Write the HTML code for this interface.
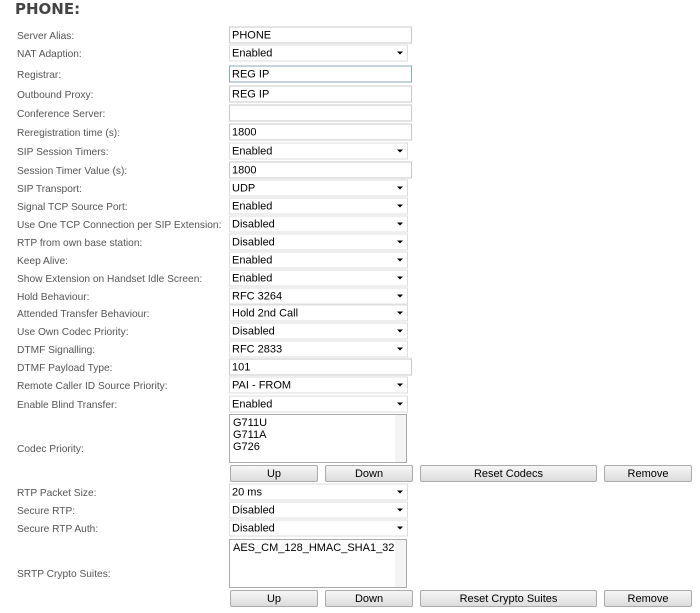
<!DOCTYPE html>
<html><head><style>
body{margin:0;width:700px;height:613px;background:#fff;position:relative;overflow:hidden;font-family:"Liberation Sans",Arial,sans-serif}
h1{position:absolute;left:15px;top:0;margin:0;font-size:15px;font-weight:bold;color:#444;font-family:"DejaVu Sans",sans-serif}
.l{position:absolute;left:17px;font-size:10.2px;color:#555;white-space:nowrap;transform:translateY(-45%);margin-top:1px}
.i,.s{position:absolute;left:229px;height:15px;border:1px solid #c8c8c8;background:#fff;font-size:11px;color:#000;line-height:16px;padding-left:2px;box-sizing:content-box;transform:translateY(-50%)}
.i{width:179px}
.s{width:175px;border-color:#ddd}
.s:after{content:"";position:absolute;right:4px;top:6px;border-left:3px solid transparent;border-right:3px solid transparent;border-top:3px solid #000}
.r{border-color:#8ab}
.lb{position:absolute;left:229px;border:1px solid #aaa;font-size:11px;line-height:12px;padding:2px 0 0 3px;box-sizing:border-box;width:178px;height:49px}
.lb:after{content:"";position:absolute;right:0;top:0;width:11px;height:100%;background:#f4f4f4}
.b{position:absolute;height:15px;border:1px solid #aaa;border-radius:2px;background:linear-gradient(#f6f6f6,#dcdcdc);font-size:11px;text-align:center;line-height:16px;color:#000}
</style></head><body>
<h1>PHONE:</h1>
<div class="l" style="top:35px">Server Alias:</div><div class="i" style="top:35px">PHONE</div>
<div class="l" style="top:53px">NAT Adaption:</div><div class="s" style="top:53px">Enabled</div>
<div class="l" style="top:74px">Registrar:</div><div class="i r" style="top:74px">REG IP</div>
<div class="l" style="top:94px">Outbound Proxy:</div><div class="i" style="top:94px">REG IP</div>
<div class="l" style="top:113px">Conference Server:</div><div class="i" style="top:113px"></div>
<div class="l" style="top:132px">Reregistration time (s):</div><div class="i" style="top:132px">1800</div>
<div class="l" style="top:151px">SIP Session Timers:</div><div class="s" style="top:151px">Enabled</div>
<div class="l" style="top:170px">Session Timer Value (s):</div><div class="i" style="top:170px">1800</div>
<div class="l" style="top:188px">SIP Transport:</div><div class="s" style="top:188px">UDP</div>
<div class="l" style="top:206px">Signal TCP Source Port:</div><div class="s" style="top:206px">Enabled</div>
<div class="l" style="top:224px">Use One TCP Connection per SIP Extension:</div><div class="s" style="top:224px">Disabled</div>
<div class="l" style="top:242px">RTP from own base station:</div><div class="s" style="top:242px">Disabled</div>
<div class="l" style="top:260px">Keep Alive:</div><div class="s" style="top:260px">Enabled</div>
<div class="l" style="top:278px">Show Extension on Handset Idle Screen:</div><div class="s" style="top:278px">Enabled</div>
<div class="l" style="top:296px">Hold Behaviour:</div><div class="s" style="top:296px">RFC 3264</div>
<div class="l" style="top:313px">Attended Transfer Behaviour:</div><div class="s" style="top:313px">Hold 2nd Call</div>
<div class="l" style="top:331px">Use Own Codec Priority:</div><div class="s" style="top:331px">Disabled</div>
<div class="l" style="top:349px">DTMF Signalling:</div><div class="s" style="top:349px">RFC 2833</div>
<div class="l" style="top:367px">DTMF Payload Type:</div><div class="i" style="top:367px">101</div>
<div class="l" style="top:385px">Remote Caller ID Source Priority:</div><div class="s" style="top:385px">PAI - FROM</div>
<div class="l" style="top:404px">Enable Blind Transfer:</div><div class="s" style="top:404px">Enabled</div>
<div class="l" style="top:448px">Codec Priority:</div>
<div class="lb" style="top:414px">G711U<br>G711A<br>G726</div>
<div class="b" style="top:465px;left:230px;width:86px">Up</div>
<div class="b" style="top:465px;left:325px;width:86px">Down</div>
<div class="b" style="top:465px;left:420px;width:175px">Reset Codecs</div>
<div class="b" style="top:465px;left:604px;width:86px">Remove</div>
<div class="l" style="top:492px">RTP Packet Size:</div><div class="s" style="top:492px">20 ms</div>
<div class="l" style="top:510px">Secure RTP:</div><div class="s" style="top:510px">Disabled</div>
<div class="l" style="top:528px">Secure RTP Auth:</div><div class="s" style="top:528px">Disabled</div>
<div class="l" style="top:573px">SRTP Crypto Suites:</div>
<div class="lb" style="top:539px">AES_CM_128_HMAC_SHA1_32</div>
<div class="b" style="top:590px;left:230px;width:86px">Up</div>
<div class="b" style="top:590px;left:325px;width:86px">Down</div>
<div class="b" style="top:590px;left:420px;width:175px">Reset Crypto Suites</div>
<div class="b" style="top:590px;left:604px;width:86px">Remove</div>
</body></html>
